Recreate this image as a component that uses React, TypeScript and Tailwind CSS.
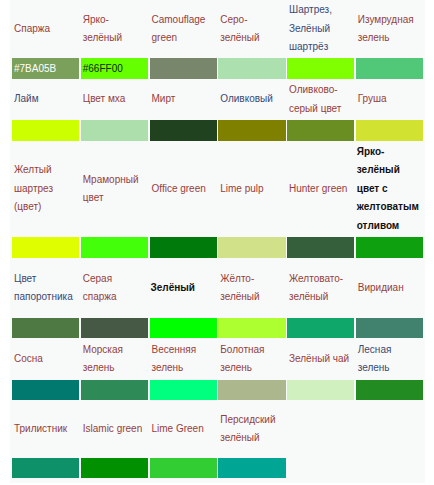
import React from "react";

type Shade = {
  lines: string[];
  color: string;
  tone?: "red" | "blue" | "bold";
  label?: string;
  labelColor?: string;
};

const rows: { nameH: string; swatchH: string; items: Shade[] }[] = [
  {
    nameH: "h-[58px]",
    swatchH: "h-[21px]",
    items: [
      { lines: ["Спаржа"], color: "#7BA05B", label: "#7BA05B", labelColor: "#ffffff" },
      { lines: ["Ярко-", "зелёный"], color: "#66FF00", label: "#66FF00", labelColor: "#0c2a00" },
      { lines: ["Camouflage", "green"], color: "#78866B" },
      { lines: ["Серо-", "зелёный"], color: "#ACE1AF" },
      { lines: ["Шартрез,", "Зелёный", "шартрёз"], color: "#7FFF00", tone: "blue" },
      { lines: ["Изумрудная", "зелень"], color: "#50C878" },
    ],
  },
  {
    nameH: "h-[41px]",
    swatchH: "h-[21px]",
    items: [
      { lines: ["Лайм"], color: "#CCFF00", tone: "blue" },
      { lines: ["Цвет мха"], color: "#ADDFAD" },
      { lines: ["Мирт"], color: "#21421E" },
      { lines: ["Оливковый"], color: "#808000", tone: "blue" },
      { lines: ["Оливково-", "серый цвет"], color: "#6B8E23" },
      { lines: ["Груша"], color: "#D1E231" },
    ],
  },
  {
    nameH: "h-[96px]",
    swatchH: "h-[21px]",
    items: [
      { lines: ["Желтый", "шартрез", "(цвет)"], color: "#DFFF00" },
      { lines: ["Мраморный", "цвет"], color: "#44FF0A" },
      { lines: ["Office green"], color: "#007A0A" },
      { lines: ["Lime pulp"], color: "#D1E189" },
      { lines: ["Hunter green"], color: "#355E3B" },
      {
        lines: ["Ярко-", "зелёный", "цвет с", "желтоватым", "отливом"],
        color: "#0FA00F",
        tone: "bold",
      },
    ],
  },
  {
    nameH: "h-[60px]",
    swatchH: "h-[20px]",
    items: [
      { lines: ["Цвет", "папоротника"], color: "#4F7942", tone: "blue" },
      { lines: ["Серая", "спаржа"], color: "#465945" },
      { lines: ["Зелёный"], color: "#00FF00", tone: "bold" },
      { lines: ["Жёлто-", "зелёный"], color: "#ADFF2F" },
      { lines: ["Желтовато-", "зелёный"], color: "#10A86A" },
      { lines: ["Виридиан"], color: "#40826D" },
    ],
  },
  {
    nameH: "h-[42px]",
    swatchH: "h-[20px]",
    items: [
      { lines: ["Сосна"], color: "#01796F" },
      { lines: ["Морская", "зелень"], color: "#2E8B57" },
      { lines: ["Весенняя", "зелень"], color: "#00FF7F" },
      { lines: ["Болотная", "зелень"], color: "#ACB78E" },
      { lines: ["Зелёный чай"], color: "#D0F0C0" },
      { lines: ["Лесная", "зелень"], color: "#228B22", tone: "blue" },
    ],
  },
  {
    nameH: "h-[58px]",
    swatchH: "h-[20px]",
    items: [
      { lines: ["Трилистник"], color: "#0E9068" },
      { lines: ["Islamic green"], color: "#009000" },
      { lines: ["Lime Green"], color: "#32CD32" },
      { lines: ["Персидский", "зелёный"], color: "#00A693" },
    ],
  },
];

const toneClass = (tone?: Shade["tone"]) => {
  if (tone === "bold") return "font-bold text-[#111111] pl-[1px]";
  if (tone === "blue") return "text-[#384a72] pl-[2px]";
  return "text-[#933f3f] pl-[2px]";
};

export default function App() {
  return (
    <div className="w-[434px] h-[485px] bg-white font-['Liberation_Sans',Arial,sans-serif]">
      <div className="ml-[10px] w-[415px] h-[483px] bg-[#f8f9f9] px-[2px]">
        {rows.map((row, r) => (
          <div key={r}>
            <div className={`grid grid-cols-6 gap-x-[1.5px] ${row.nameH}`}>
              {row.items.map((s, i) => (
                <div
                  key={i}
                  className={`flex flex-col justify-center text-[10px] leading-[18.5px] ${toneClass(s.tone)}`}
                >
                  {s.lines.map((l, k) => (
                    <span key={k} className="whitespace-nowrap">
                      {l}
                    </span>
                  ))}
                </div>
              ))}
            </div>
            <div className={`grid grid-cols-6 gap-x-[1.5px] ${row.swatchH}`}>
              {row.items.map((s, i) => (
                <div
                  key={i}
                  className="flex items-center pl-[2px] text-[10px] leading-none"
                  style={{ backgroundColor: s.color, color: s.labelColor }}
                >
                  {s.label}
                </div>
              ))}
            </div>
          </div>
        ))}
      </div>
    </div>
  );
}
